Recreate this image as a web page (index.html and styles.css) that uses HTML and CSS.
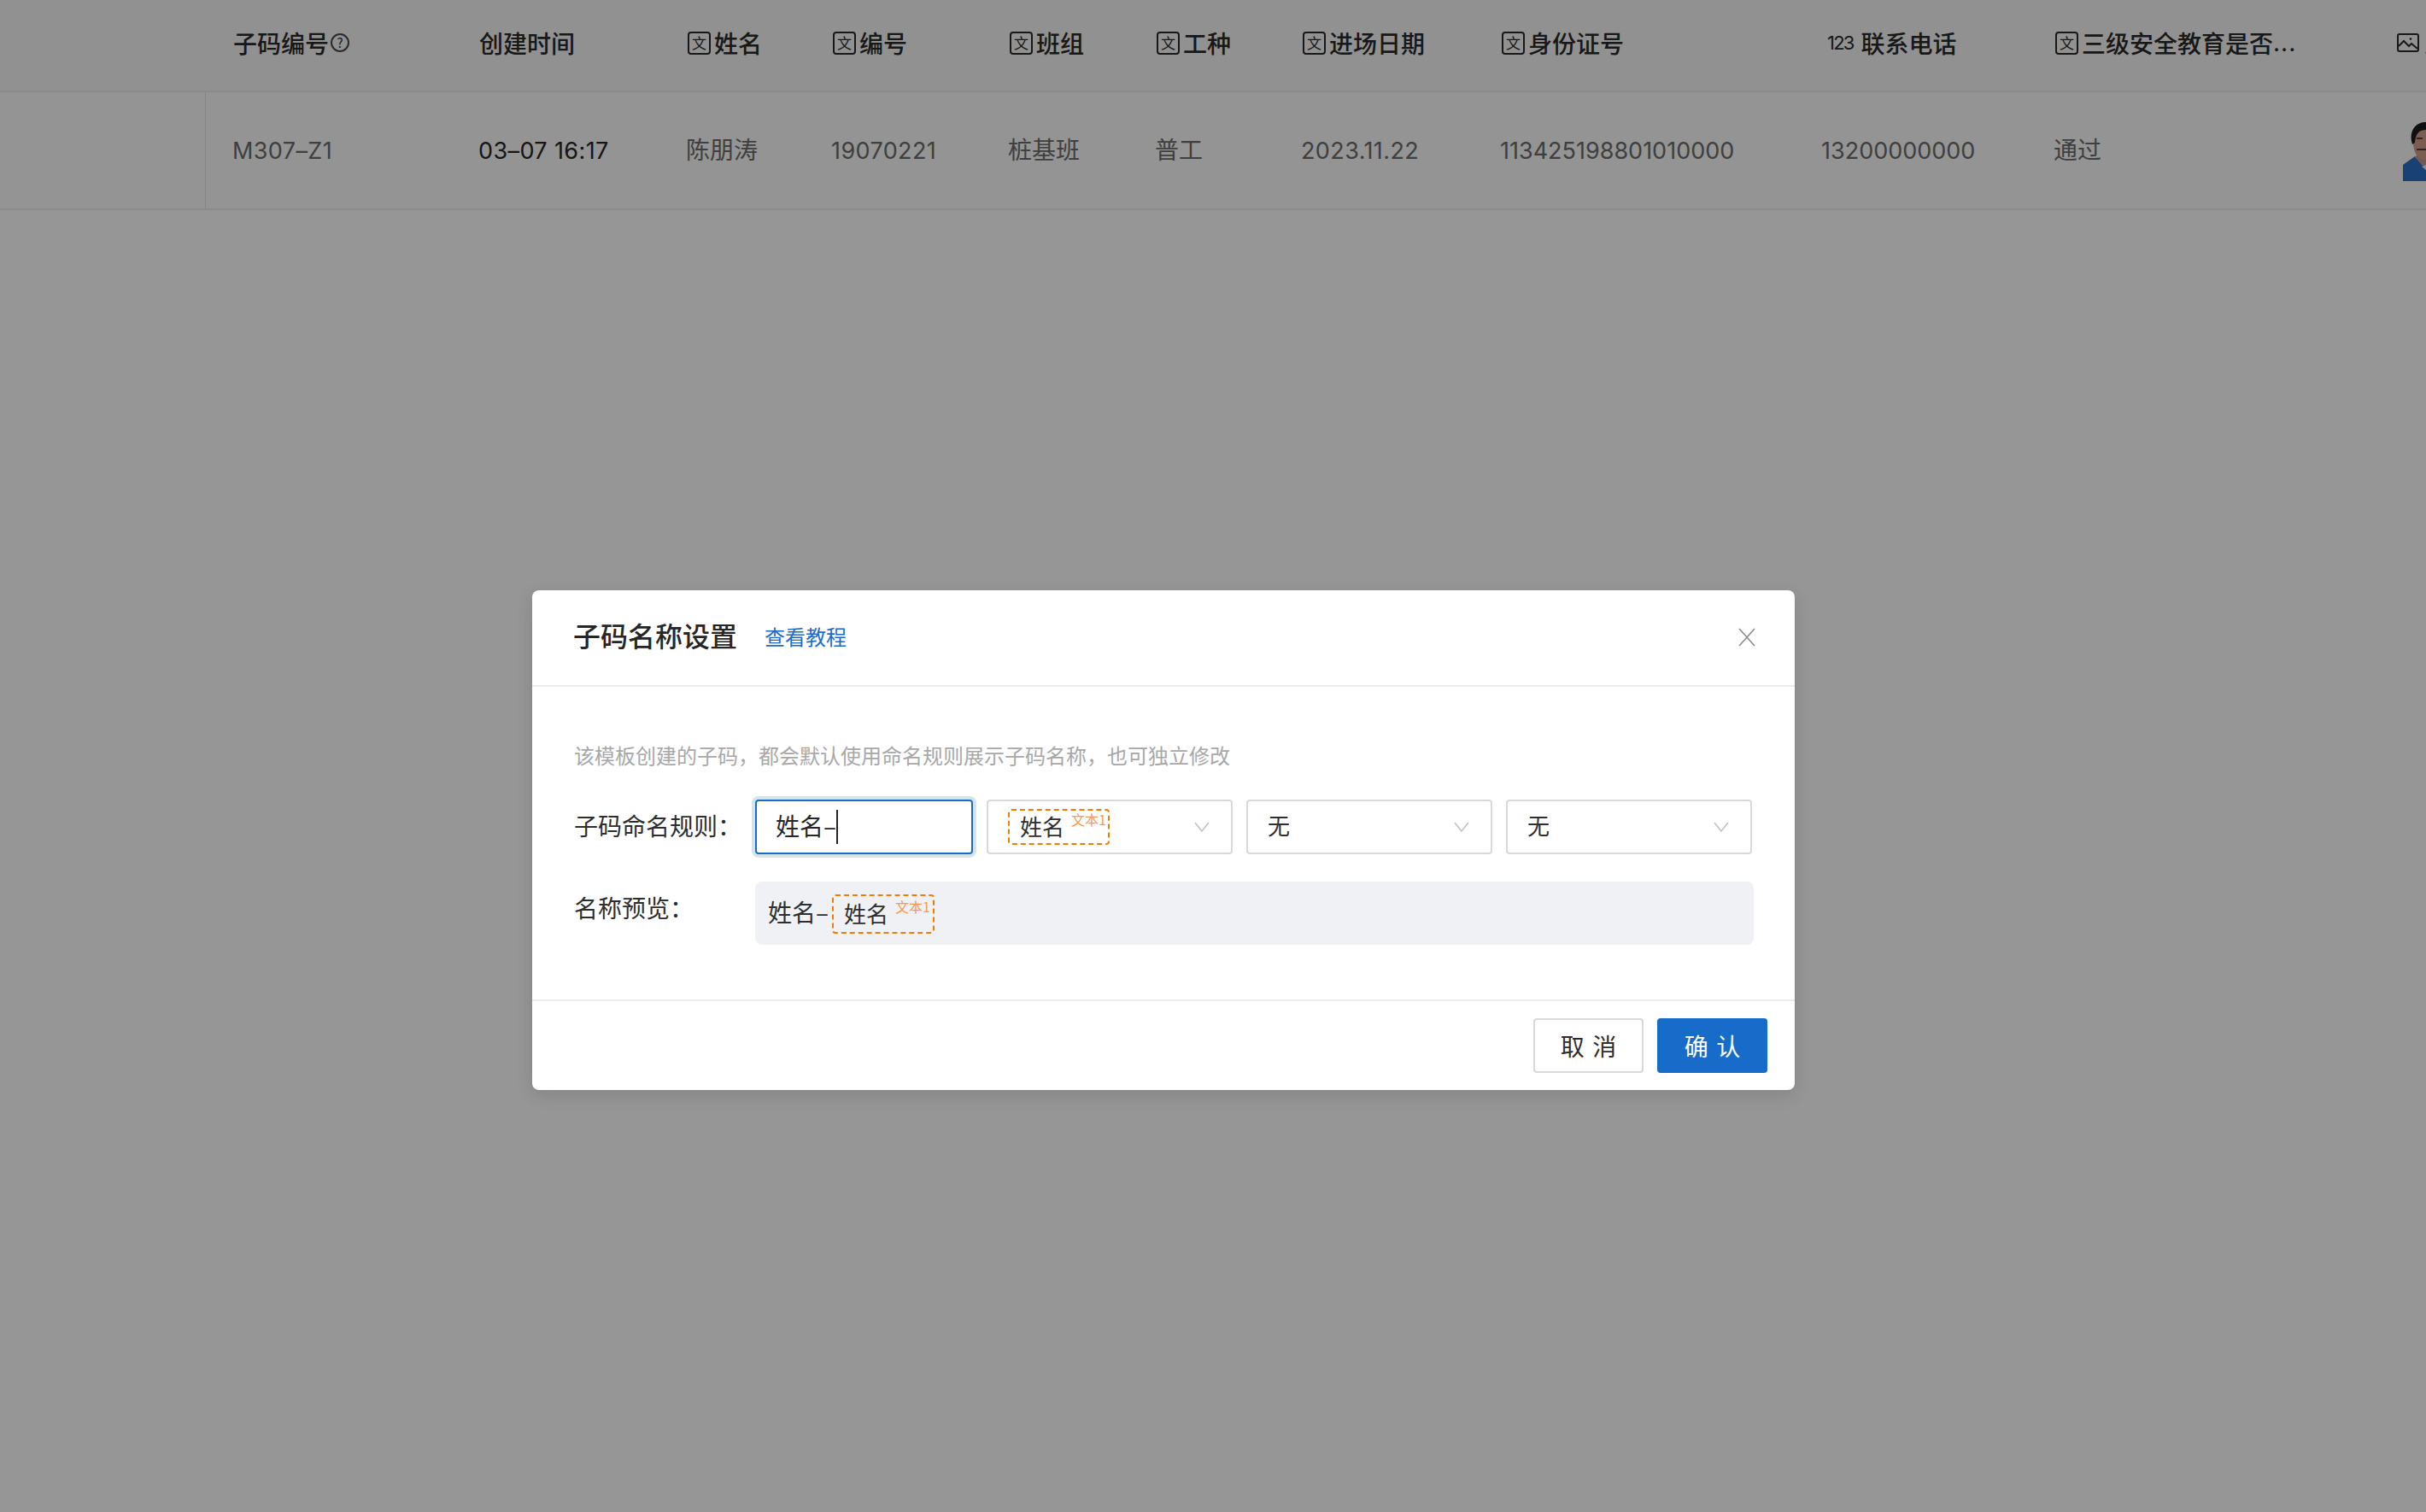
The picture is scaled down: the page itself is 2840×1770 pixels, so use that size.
FILE: index.html
```html
<!DOCTYPE html>
<html lang="zh-CN">
<head>
<meta charset="utf-8">
<title>子码名称设置</title>
<link rel="stylesheet" href="styles.css">
</head>
<body>
<main class="page">
  <div class="grid head">
    <div class="cell fixed"></div>
    <div class="cell"><span class="th th-plain">子码编号<span class="help">?</span></span></div>
    <div class="cell"><span class="th th-plain">创建时间</span></div>
    <div class="cell"><span class="th"><span class="ti">文</span>姓名</span></div>
    <div class="cell"><span class="th"><span class="ti">文</span>编号</span></div>
    <div class="cell"><span class="th"><span class="ti">文</span>班组</span></div>
    <div class="cell"><span class="th"><span class="ti">文</span>工种</span></div>
    <div class="cell"><span class="th"><span class="ti">文</span>进场日期</span></div>
    <div class="cell"><span class="th"><span class="ti">文</span>身份证号</span></div>
    <div class="cell"><span class="th th-num"><span class="tn">123</span>联系电话</span></div>
    <div class="cell"><span class="th"><span class="ti">文</span>三级安全教育是否<span class="dots">...</span></span></div>
    <div class="cell"><span class="th th-img">
      <svg class="img-icon" viewBox="0 0 26 22" fill="none" stroke="currentColor" stroke-width="2"><rect x="1" y="1" width="24" height="20" rx="2"/><path d="M2 15l6-6 6 6 3-3 7 6"/><circle cx="16" cy="6.500" r="1.300" fill="currentColor" stroke="none"/></svg>人脸照片</span></div>
  </div>
  <div class="grid row">
    <div class="cell fixed line"></div>
    <div class="cell td wide">M307–Z1</div>
    <div class="cell td wide strong">03–07 16:17</div>
    <div class="cell td cjk">陈朋涛</div>
    <div class="cell td wide">19070221</div>
    <div class="cell td cjk">桩基班</div>
    <div class="cell td cjk">普工</div>
    <div class="cell td wide">2023.11.22</div>
    <div class="cell td">113425198801010000</div>
    <div class="cell td">13200000000</div>
    <div class="cell td cjk">通过</div>
    <div class="cell td photo-cell">
      <svg class="photo" viewBox="0 0 27 69" role="img" aria-label="照片">
        <path d="M0 50 14 40 20 46 27 52V69H0Z" fill="#2b6fc4"/>
        <path d="M14 41 19 36H27V54L22 50Z" fill="#c89580"/>
        <path d="M22 52 27 50V56Z" fill="#eee"/>
        <ellipse cx="25" cy="24" rx="13" ry="20" fill="#d0a08c"/>
        <path d="M10 22C8 8 16 0 27 0V9C20 9 15 12 14 24L11 26Z" fill="#1c1c1f"/>
        <path d="M16 19h7M16 32h11" stroke="#5a3a34" stroke-width="2" fill="none"/>
      </svg>
    </div>
  </div>
</main>

<div class="mask">
  <section class="modal">
    <header class="modal-head">
      <h1 class="modal-title">子码名称设置</h1>
      <a class="modal-link">查看教程</a>
      <svg class="close" viewBox="0 0 20 22" fill="none" stroke="currentColor" stroke-width="1.600"><path d="M1 1l18 20M19 1L1 21"/></svg>
    </header>
    <div class="modal-body">
      <p class="desc">该模板创建的子码，都会默认使用命名规则展示子码名称，也可独立修改</p>
      <div class="form-row">
        <label class="form-label">子码命名规则：</label>
        <div class="controls">
          <div class="input"><span class="lift">姓名–</span><i class="caret"></i></div>
          <div class="select">
            <span class="tag"><span class="tag-name">姓名</span><sup class="tag-sup">文本1</sup></span>
            <svg class="chev" viewBox="0 0 18 12" fill="none" stroke="currentColor" stroke-width="1.500"><path d="M1 1l8 10 8-10"/></svg>
          </div>
          <div class="select">
            <span class="none">无</span>
            <svg class="chev" viewBox="0 0 18 12" fill="none" stroke="currentColor" stroke-width="1.500"><path d="M1 1l8 10 8-10"/></svg>
          </div>
          <div class="select">
            <span class="none">无</span>
            <svg class="chev" viewBox="0 0 18 12" fill="none" stroke="currentColor" stroke-width="1.500"><path d="M1 1l8 10 8-10"/></svg>
          </div>
        </div>
      </div>
      <div class="form-row preview-row">
        <label class="form-label">名称预览：</label>
        <div class="preview">
          <span class="preview-text lift">姓名–</span>
          <span class="tag tag-lg"><span class="tag-name">姓名</span><sup class="tag-sup">文本1</sup></span>
        </div>
      </div>
    </div>
    <footer class="modal-foot">
      <button class="btn">取 消</button>
      <button class="btn primary">确 认</button>
    </footer>
  </section>
</div>
</body>
</html>
```

FILE: styles.css
```css
* { box-sizing: border-box; }
html, body { margin: 0; padding: 0; }
body {
  width: 2840px;
  height: 1770px;
  overflow: hidden;
  position: relative;
  background: #fff;
  font-family: Inter, "Noto Sans CJK SC", sans-serif;
  color: #262626;
}
.page { width: 2840px; overflow: hidden; }
.grid {
  display: grid;
  grid-template-columns: 241px 288px 243px 170px 207px 172px 171px 233px 376px 272px 409px 68px;
}
.head { height: 108px; background: #f6f6f6; border-bottom: 2px solid #ececec; }
.row { height: 138px; border-bottom: 2px solid #ececec; background: #fbfbfb; }
.cell {
  padding-left: 31px;
  display: flex;
  align-items: center;
  white-space: nowrap;
  overflow: hidden;
}
.fixed { padding: 0; }
.line { border-right: 1px solid #e3e3e3; }
.th {
  display: flex;
  align-items: center;
  margin-top: -6px;
  margin-left: 2px;
  font-family: "Noto Sans CJK SC", sans-serif;
  font-size: 28px;
  font-weight: 500;
  color: #2a2a2a;
  line-height: 40px;
}
.th-plain { margin-left: 1px; }
.th-num { margin-left: 7px; }
.th-img { margin-left: -7px; font-weight: 500; }
.ti {
  width: 27px;
  height: 27px;
  margin-right: 4px;
  border: 2px solid #2a2a2a;
  border-radius: 4px;
  font-size: 17px;
  font-weight: 400;
  line-height: 22px;
  text-align: center;
  flex: none;
}
.tn {
  font-family: Inter, sans-serif;
  font-size: 22px;
  font-weight: 400;
  letter-spacing: -1.800px;
  margin-right: 9px;
}
.help {
  width: 22px;
  height: 22px;
  margin-left: 2px;
  border: 2px solid #4a4a4a;
  border-radius: 50%;
  font-size: 15px;
  font-weight: 400;
  line-height: 18px;
  text-align: center;
}
.dots { font-family: Inter, sans-serif; font-weight: 400; letter-spacing: 1px; }
.img-icon { width: 26px; height: 22px; margin-right: 6px; flex: none; }
.td { font-size: 27px; font-weight: 400; color: #6c6c6c; }
.wide { letter-spacing: 0.400px; }
.cjk { font-family: "Noto Sans CJK SC", sans-serif; font-size: 28px; padding-bottom: 4px; }
.strong { color: #262626; }
.photo-cell { padding-left: 31px; align-items: flex-start; padding-top: 35px; }
.photo { width: 27px; height: 69px; display: block; }

.mask { position: absolute; inset: 0; background: rgba(0, 0, 0, 0.41); }
.modal {
  position: absolute;
  left: 623px;
  top: 691px;
  width: 1478px;
  background: #fff;
  border-radius: 8px;
  box-shadow: 0 6px 20px rgba(0, 0, 0, 0.12);
  font-family: "Noto Sans CJK SC", sans-serif;
}
.modal-head {
  height: 113px;
  padding: 0 46px 8px 48px;
  display: flex;
  align-items: center;
  border-bottom: 2px solid #ebebeb;
}
.modal-title { margin: 0; font-size: 32px; font-weight: 500; color: #262626; line-height: 44px; }
.modal-link { margin-left: 32px; margin-top: 4px; font-size: 24px; color: #1a6dcc; line-height: 34px; }
.close { margin-left: auto; margin-top: 6px; width: 20px; height: 22px; color: #8c8c8c; }
.modal-body { padding: 62px 48px 64px 49px; height: 366px; }
.desc { margin: 0 0 34px; font-size: 24px; line-height: 36px; color: #a8a8a8; }
.form-row { display: flex; }
.preview-row { margin-top: 32px; }
.form-label {
  width: 212px;
  height: 64px;
  font-size: 28px;
  line-height: 60px;
  color: #2e2e2e;
  flex: none;
}
.lift { margin-bottom: 4px; }
.controls { display: flex; gap: 16px; }
.input {
  width: 255px;
  height: 64px;
  padding-left: 22px;
  display: flex;
  align-items: center;
  border: 2px solid #186cc9;
  border-radius: 4px;
  box-shadow: 0 0 0 4px #d6e4e7;
  font-size: 28px;
}
.caret { width: 2px; height: 40px; background: #262626; }
.select {
  width: 288px;
  height: 64px;
  padding: 0 25px 0 23px;
  display: flex;
  align-items: center;
  justify-content: space-between;
  border: 2px solid #d9d9d9;
  border-radius: 4px;
}
.none { font-size: 26px; color: #2e2e2e; margin-bottom: 6px; }
.chev { width: 18px; height: 12px; color: #c0c0c0; flex: none; }
.tag {
  width: 119px;
  height: 42px;
  padding-left: 12px;
  display: flex;
  align-items: center;
  gap: 8px;
  border: 2px dashed #f57c00;
  border-radius: 4px;
  flex: none;
}
.tag-lg { width: 120px; height: 46px; margin-top: 2px; }
.tag-name { font-size: 26px; color: #2e2e2e; white-space: nowrap; flex: none; margin-bottom: 4px; }
.tag-sup { font-size: 16px; line-height: 18px; color: #f79a4f; align-self: flex-start; margin-top: 1px; white-space: nowrap; flex: none; }
.tag-lg .tag-sup { margin-top: 3px; }
.preview {
  width: 1169px;
  height: 74px;
  padding-left: 15px;
  display: flex;
  align-items: center;
  background: #f0f1f5;
  border-radius: 8px;
}
.preview-text { font-size: 28px; color: #2e2e2e; width: 75px; white-space: nowrap; }
.modal-foot {
  height: 106px;
  padding: 20px 32px 20px 0;
  display: flex;
  justify-content: flex-end;
  gap: 16px;
  border-top: 2px solid #ebebeb;
}
.btn {
  width: 129px;
  height: 64px;
  padding: 0;
  background: #fff;
  border: 2px solid #d9d9d9;
  border-radius: 4px;
  font-family: "Noto Sans CJK SC", sans-serif;
  font-size: 28px;
  color: #2e2e2e;
  word-spacing: 3px;
}
.primary { background: #186cc9; border-color: #186cc9; color: #fff; }
```
